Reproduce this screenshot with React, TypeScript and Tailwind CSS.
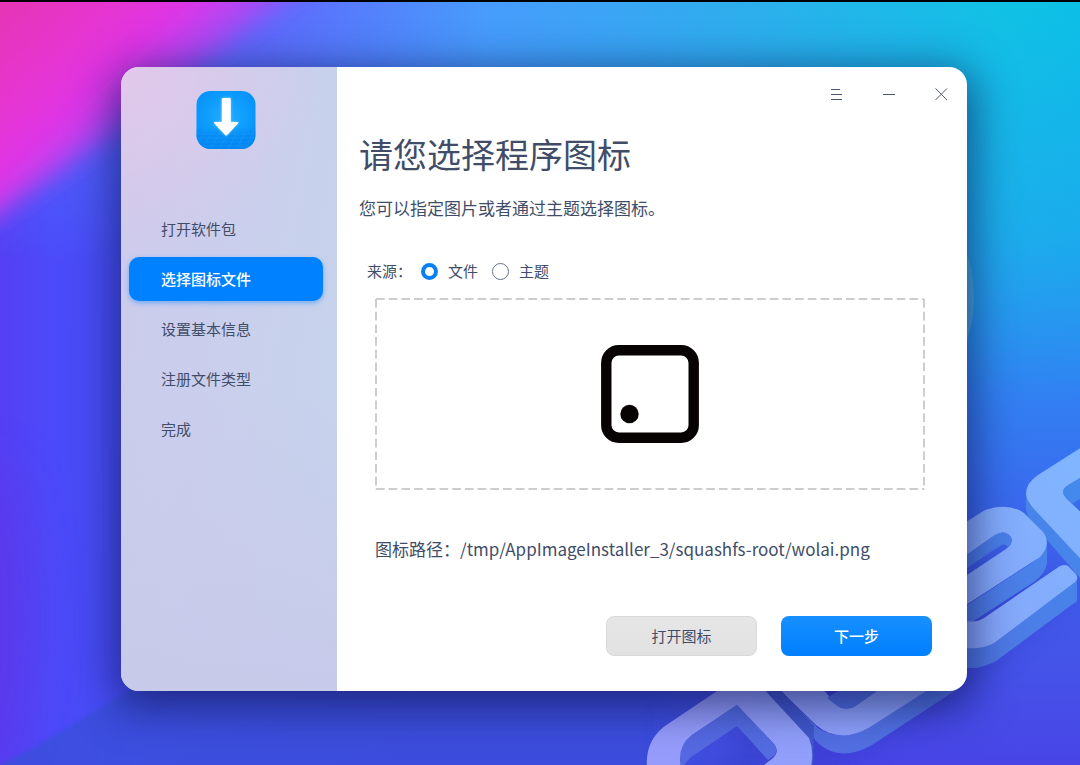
import { useState } from "react";

const steps = ["打开软件包", "选择图标文件", "设置基本信息", "注册文件类型", "完成"];

function Wallpaper() {
  return (
    <svg
      aria-hidden="true"
      className="absolute inset-0 -z-10 h-full w-full"
      viewBox="0 0 1080 765"
      preserveAspectRatio="xMidYMid slice"
    >
      <defs>
        <linearGradient id="base" x1="0" y1="0" x2="1080" y2="0" gradientUnits="userSpaceOnUse">
          <stop offset="0" stopColor="#6a48fa" />
          <stop offset="0.25" stopColor="#6068fc" />
          <stop offset="0.45" stopColor="#489cfc" />
          <stop offset="0.7" stopColor="#2cb0ec" />
          <stop offset="0.93" stopColor="#10c2e4" />
          <stop offset="1" stopColor="#0cc0e6" />
        </linearGradient>
        <linearGradient id="fall" x1="0" y1="0" x2="0" y2="765" gradientUnits="userSpaceOnUse">
          <stop offset="0" stopColor="#2b94f4" stopOpacity="0" />
          <stop offset="0.3" stopColor="#2b94f4" stopOpacity="0.45" />
          <stop offset="0.52" stopColor="#347cf3" stopOpacity="0.95" />
          <stop offset="0.7" stopColor="#3c62ec" />
          <stop offset="0.9" stopColor="#4650e8" />
          <stop offset="1" stopColor="#4844e6" />
        </linearGradient>
        <linearGradient id="left" x1="0" y1="0" x2="420" y2="0" gradientUnits="userSpaceOnUse">
          <stop offset="0" stopColor="#553ff4" />
          <stop offset="0.12" stopColor="#4c4afa" />
          <stop offset="0.35" stopColor="#4650f4" stopOpacity="0.95" />
          <stop offset="1" stopColor="#3c56e4" stopOpacity="0" />
        </linearGradient>
        <linearGradient id="leftFade" x1="0" y1="60" x2="0" y2="260" gradientUnits="userSpaceOnUse">
          <stop offset="0" stopColor="#000" />
          <stop offset="1" stopColor="#fff" />
        </linearGradient>
        <mask id="leftMask">
          <rect width="1080" height="765" fill="url(#leftFade)" />
        </mask>
        <linearGradient id="pink" x1="0" y1="0" x2="180" y2="193" gradientUnits="userSpaceOnUse">
          <stop offset="0" stopColor="#e636b4" />
          <stop offset="0.3" stopColor="#e636d0" />
          <stop offset="0.5" stopColor="#de36e8" />
          <stop offset="0.66" stopColor="#b844f2" stopOpacity="0.8" />
          <stop offset="1" stopColor="#6a58fc" stopOpacity="0" />
        </linearGradient>
        <linearGradient id="face" x1="1080" y1="450" x2="680" y2="765" gradientUnits="userSpaceOnUse">
          <stop offset="0" stopColor="#80b6ff" />
          <stop offset="0.35" stopColor="#86a8fb" />
          <stop offset="1" stopColor="#969cfb" />
        </linearGradient>
        <linearGradient id="side" x1="1080" y1="450" x2="680" y2="765" gradientUnits="userSpaceOnUse">
          <stop offset="0" stopColor="#438cee" />
          <stop offset="0.4" stopColor="#4f78e4" />
          <stop offset="1" stopColor="#5668e2" />
        </linearGradient>
        <filter id="soft" x="-20%" y="-20%" width="140%" height="140%">
          <feGaussianBlur stdDeviation="12" />
        </filter>
        <filter id="softer" x="-80%" y="-50%" width="260%" height="200%">
          <feGaussianBlur stdDeviation="26" />
        </filter>
        <filter id="edge" x="-10%" y="-10%" width="120%" height="120%">
          <feGaussianBlur stdDeviation="2" />
        </filter>
      </defs>

      <rect width="1080" height="765" fill="url(#base)" />
      <rect width="1080" height="765" fill="url(#fall)" />
      <rect width="1080" height="765" fill="url(#left)" mask="url(#leftMask)" />
      <path d="M-60 -60H360L130 120L-60 255Z" fill="url(#pink)" filter="url(#soft)" />
      <ellipse cx="-14" cy="620" rx="46" ry="160" fill="#6430e0" opacity="0.45" filter="url(#softer)" />
      <path d="M-10 770L50 737L170 665H760V800H-10Z" fill="#3a50dc" opacity="0.85" filter="url(#edge)" />
      <path d="M700 660H800V800H700Z" fill="#4650e4" opacity="0.8" filter="url(#softer)" />
      <ellipse cx="850" cy="296" rx="124" ry="130" fill="#58b4d8" opacity="0.65" />

      {/* soft cast shadow under the lettering */}
      <path d="M1080 590L950 700L820 775L700 800L760 700L1000 560Z" fill="#2c36b8" opacity="0.35" filter="url(#soft)" />

      {/* p */}
      <path d="M1026 493V508Q1028 518 1036 526L1080 577V545Z" fill="url(#side)" />
      <path
        fillRule="evenodd"
        d="M1090 441L1038 474Q1026 482 1026 493Q1027 500 1034 508L1090 568V520L1066 497Q1060 490 1067 485L1090 471Z"
        fill="url(#face)"
      />
      <path d="M1064 494Q1061 489 1067 485L1090 471V492L1072 503Z" fill="url(#side)" />

      {/* e, upper */}
      <path d="M955 612L1030 563Q1047 552 1047 540V562Q1046 572 1034 581L955 632Z" fill="url(#side)" />
      <path d="M955 645L985 645L1077 577V600L996 660Q982 668 967 667H955Z" fill="url(#side)" />
      <path
        fillRule="evenodd"
        d="M955 528L985 509Q1008 501 1024 512L1043 531Q1052 543 1040 556L955 611ZM955 562V582L1006 548Q1014 542 1011 536Q1005 528 995 534Z"
        fill="url(#face)"
      />
      <path d="M955 562L995 534Q1005 528 1011 536Q1013 541 1008 546Q1004 541 998 546L955 575Z" fill="url(#side)" />
      <path d="M955 620H967Q976 622 984 617L1060 565Q1067 562 1070 567L1076 573Q1079 578 1075 581L994 642Q980 650 955 646Z" fill="url(#face)" />

      {/* e, lower */}
      <path d="M775 685L818 727Q842 742 867 727L930 685H962L872 744Q840 762 818 742L776 696Z" fill="url(#side)" />
      <path d="M776 685L816 724Q840 744 870 726L934 685H884L854 706Q844 710 837 704L820 685Z" fill="url(#face)" />
      <path d="M827 697L846 685H884L854 706Q844 710 837 705Z" fill="url(#side)" />

      {/* d */}
      <path d="M762 685H777L814 725L813 765H800L764 705Z" fill="#4258cc" />
      <path
        fillRule="evenodd"
        d="M726 684L665 725Q642 742 648 775H808Q816 754 809 737L760 684ZM737 704L774 743Q780 750 773 757L750 775H684Q675 748 692 734Z"
        fill="url(#face)"
      />
      <path d="M737 704L774 743Q778 748 775 754L768 759L737 725L697 752Q684 759 682 772Q675 746 692 734Z" fill="url(#side)" />
    </svg>
  );
}

function AppLogo() {
  return (
    <svg viewBox="0 0 60 58" className="h-[58px] w-[60px]" role="img" aria-label="logo">
      <defs>
        <radialGradient id="logoFill" cx="0.5" cy="0.45" r="0.65">
          <stop offset="0" stopColor="#22acff" />
          <stop offset="0.6" stopColor="#0c9bfd" />
          <stop offset="1" stopColor="#058ef6" />
        </radialGradient>
        <linearGradient id="floor" x1="0" y1="36" x2="0" y2="58" gradientUnits="userSpaceOnUse">
          <stop offset="0" stopColor="#0080ee" stopOpacity="0" />
          <stop offset="0.35" stopColor="#0080ee" stopOpacity="0.5" />
          <stop offset="1" stopColor="#0080ee" stopOpacity="0.7" />
        </linearGradient>
        <clipPath id="logoClip">
          <rect x="0.5" width="59" height="58" rx="14" />
        </clipPath>
        <filter id="glow" x="-50%" y="-50%" width="200%" height="200%">
          <feGaussianBlur stdDeviation="1.6" />
        </filter>
      </defs>
      <g clipPath="url(#logoClip)">
        <rect width="60" height="58" fill="url(#logoFill)" />
        <path d="M0 36H60V58H0Z" fill="url(#floor)" />
        <path
          d="M0 43H60M0 47H60M0 51H60M0 55H60M10 39L-4 58M18 39L5 58M26 39L14 58M34 39L23 58M42 39L32 58M50 39L41 58M58 39L50 58M66 41L58 58"
          stroke="#2aa4ff"
          strokeWidth="0.8"
          opacity="0.4"
          fill="none"
        />
      </g>
      <path d="M26 7H34.500V31H42L30 45L18 31H26Z" fill="#a8e4ff" filter="url(#glow)" opacity="0.8" />
      <path
        d="M27 7H33.800Q34.800 7 34.800 8V31H42Q43 31.300 42.300 32.200L31.200 44Q30.200 45 29.200 44L18 32.200Q17.500 31.300 18.500 31H25.800V8Q25.800 7 27 7Z"
        fill="#fff"
      />
    </svg>
  );
}

function PreviewIcon() {
  return (
    <svg viewBox="0 0 98 98" className="size-[98px]" role="img" aria-label="wolai">
      <rect x="5.300" y="5.300" width="87.400" height="87.400" rx="12.500" fill="none" stroke="#070303" strokeWidth="10.400" />
      <circle cx="28.500" cy="69" r="9.200" fill="#070303" />
    </svg>
  );
}

function Radio({ label, checked, onSelect }: { label: string; checked: boolean; onSelect: () => void }) {
  return (
    <label className="flex items-center gap-[10px]">
      <input
        type="radio"
        name="source"
        checked={checked}
        onChange={onSelect}
        className="size-[17px] appearance-none rounded-full border border-[#66708a] bg-white checked:border-4 checked:border-[#0a80f5]"
      />
      {label}
    </label>
  );
}

const controls = [
  { name: "菜单", d: "M0 1.500H9M0 6.500H11M0 11.500H11" },
  { name: "最小化", d: "M0 6.500H12" },
  { name: "关闭", d: "M0.500 0.500L12 12M12 0.500L0.500 12" },
];

export default function App() {
  const [source, setSource] = useState("file");

  return (
    <div
      lang="zh-CN"
      className="relative isolate flex min-h-screen overflow-hidden border-t-2 border-black pt-[65px] pr-[113px] pb-[74px] pl-[121px] font-['Noto_Sans_CJK_SC',sans-serif] text-[15px] leading-6 text-[#414d68]"
    >
      <Wallpaper />
      <div className="flex flex-1 overflow-hidden rounded-[18px] shadow-[0_10px_44px_6px_rgba(10,15,70,0.6)]">
        <aside className="w-[216px] shrink-0 bg-[radial-gradient(circle_at_0_0,#e2c8ea_0,#e2c8ea00_200px),linear-gradient(100deg,#cccaec_0%,#c9d0ec_55%,#c5d4ed_100%)]">
          <div className="flex h-full flex-col bg-linear-to-b from-[#c8caea]/0 from-50% to-[#c8caea] pt-6">
            <div className="flex justify-center pr-[6px]">
              <AppLogo />
            </div>
            <nav className="mt-[58px] flex flex-col gap-[6px] pr-[14px] pl-2">
              {steps.map((step, i) => (
                <a
                  key={step}
                  href="#"
                  aria-current={i === 1 ? "step" : undefined}
                  className={
                    i === 1
                      ? "flex h-11 items-center rounded-[10px] bg-[#0081ff] pl-8 font-medium text-white shadow-[0_2px_5px_rgba(0,129,255,0.45)]"
                      : "flex h-11 items-center rounded-[10px] pl-8"
                  }
                >
                  {step}
                </a>
              ))}
            </nav>
          </div>
        </aside>

        <main className="flex flex-1 flex-col bg-white">
          <header className="flex justify-end">
            {controls.map((c) => (
              <button key={c.name} type="button" aria-label={c.name} className="flex h-[54px] w-[52px] items-center justify-center">
                <svg viewBox="0 0 13 13" className="size-[13px]" fill="none" stroke="#4c566c" strokeWidth="1">
                  <path d={c.d} />
                </svg>
              </button>
            ))}
          </header>

          <div className="px-[22px]">
            <h1 className="mt-[9px] text-[34px] leading-[48px]">请您选择程序图标</h1>
            <p className="mt-[18px] text-[17px]">您可以指定图片或者通过主题选择图标。</p>
          </div>

          <fieldset className="mt-[39px] flex items-center gap-[14px] pl-[30px]">
            <div className="flex items-center gap-[9px]">
              <span>来源：</span>
              <Radio label="文件" checked={source === "file"} onSelect={() => setSource("file")} />
            </div>
            <Radio label="主题" checked={source === "theme"} onSelect={() => setSource("theme")} />
          </fieldset>

          <div className="relative mt-[15px] mr-[43px] ml-[38px] flex h-[192px] items-center justify-center">
            <svg aria-hidden="true" className="absolute inset-0 h-full w-full overflow-visible" stroke="#cdcdcd" strokeWidth="2" strokeDasharray="8.7 4">
              <line x1="1" y1="1" x2="100%" y2="1" />
              <line x1="1" y1="191" x2="100%" y2="191" />
              <line x1="1" y1="1" x2="1" y2="100%" />
              <line x1="100%" y1="1" x2="100%" y2="100%" />
            </svg>
            <PreviewIcon />
          </div>

          <p className="mt-[47px] pl-[38px] text-[17px]">图标路径：/tmp/AppImageInstaller_3/squashfs-root/wolai.png</p>

          <footer className="mt-auto flex justify-end gap-6 pr-[35px] pb-[35px]">
            <button type="button" className="h-10 w-[151px] rounded-lg border border-[#d9d9d9] bg-linear-to-b from-[#e6e6e6] to-[#e2e2e2]">
              打开图标
            </button>
            <button type="button" className="h-10 w-[151px] rounded-lg bg-linear-to-b from-[#178fff] to-[#007fff] font-medium text-white">
              下一步
            </button>
          </footer>
        </main>
      </div>
    </div>
  );
}
